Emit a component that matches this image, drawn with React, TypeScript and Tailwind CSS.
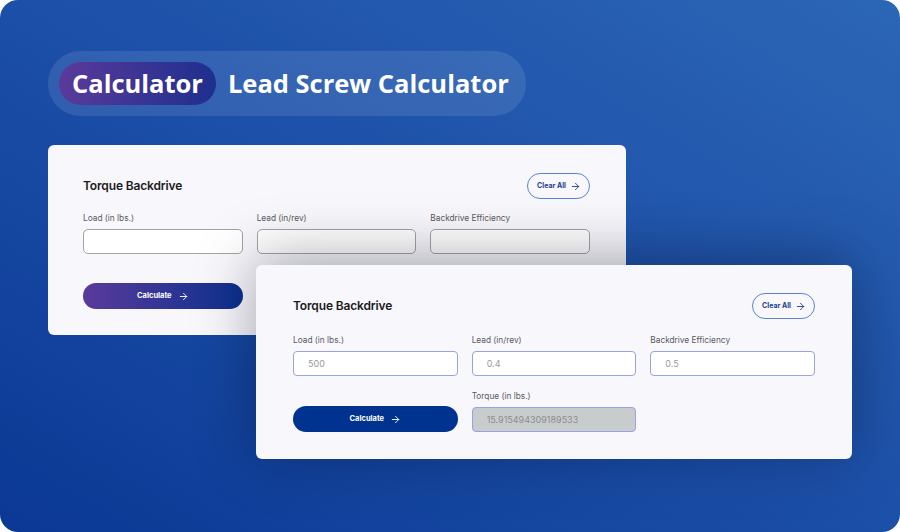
import React from "react";
import { ArrowRight } from "lucide-react";

type CardProps = {
  values?: [string, string, string];
  result?: string;
  gradientButton?: boolean;
  className: string;
  inputClass: string;
  rowGap: string;
};

function Card({ values, result, gradientButton, className, inputClass, rowGap }: CardProps) {
  const labels = ["Load (in lbs.)", "Lead (in/rev)", "Backdrive Efficiency"];
  return (
    <div className={className} style={{ fontFamily: "Inter, 'Noto Sans', sans-serif" }}>
      <div className="flex h-[26px] items-center justify-between">
        <div className="text-[12px] font-semibold tracking-[-0.15px] text-[#1b1b22]">Torque Backdrive</div>
        <button className="flex h-[26px] items-center gap-[4px] rounded-full border border-[#5d84d2] pl-[9px] pr-[8px] text-[7px] font-bold text-[#24418f]">
          Clear All
          <ArrowRight size={11} strokeWidth={2} />
        </button>
      </div>
      <div className={rowGap + " grid grid-cols-3 gap-x-[14px]"}>
        {labels.map((l, i) => (
          <div key={l} className="flex flex-col">
            <div className="h-[16px] text-[8.3px] leading-[16px] text-[#5a5a5e]">{l}</div>
            <div className={inputClass + " mt-[3px] flex h-[25px] items-center px-[14px] text-[9px] text-[#9a9a9a]"}>
              {values ? values[i] : ""}
            </div>
          </div>
        ))}
        <div className="mt-[29px] flex items-end">
          <button
            className={
              (gradientButton
                ? "bg-[linear-gradient(to_right,#5a3a9b,#0b318f)] "
                : "bg-[#00338f] ") +
              "flex h-[26px] w-full items-center justify-center gap-[6px] rounded-full text-[7.5px] font-bold text-white"
            }
          >
            Calculate
            <ArrowRight size={11} strokeWidth={2} />
          </button>
        </div>
        {result !== undefined ? (
          <div className="mt-[12px] flex flex-col">
            <div className="h-[16px] text-[8.3px] leading-[16px] text-[#5a5a5e]">Torque (in lbs.)</div>
            <div className="mt-[3px] flex h-[25px] items-center rounded-[4px] border border-[#9aa2e6] bg-[#c9cccd] px-[14px] text-[9px] text-[#8a8d90]">
              {result}
            </div>
          </div>
        ) : null}
      </div>
    </div>
  );
}

export default function App() {
  return (
    <div className="h-[532px] w-[900px] bg-white">
      <div className="relative h-full w-full overflow-hidden rounded-[18px] bg-[linear-gradient(to_top_right,#0a3894,#1c4fa8_50%,#2c66b6)] pl-[48px] pt-[51px]">
        <div
          className="inline-flex h-[65px] items-center gap-[12px] rounded-full bg-white/10 pl-[11px] pr-[17px] text-[25.5px] font-bold text-white"
          style={{ fontFamily: "'Open Sans', 'Noto Sans', sans-serif" }}
        >
          <div className="flex h-[43px] items-center rounded-full bg-[linear-gradient(to_right,#5a3a9a,#1e2f8e)] px-[13px]">
            Calculator
          </div>
          <div>Lead Screw Calculator</div>
        </div>

        <Card
          gradientButton
          rowGap="mt-[11px]"
          className="mt-[29px] h-[190px] w-[578px] rounded-[6px] bg-[#f7f7fc] pl-[35px] pr-[36px] pt-[28px]"
          inputClass="rounded-[5px] border border-[#a3a3a6] bg-white"
        />

        <Card
          values={["500", "0.4", "0.5"]}
          result="15.915494309189533"
          rowGap="mt-[13px]"
          className="absolute left-[256px] top-[265px] h-[194px] w-[596px] rounded-[6px] bg-[#f7f7fc] px-[37px] pt-[28px] shadow-[0_-6px_60px_rgba(0,0,20,0.35)]"
          inputClass="rounded-[4px] border border-[#9aa2e6] bg-white"
        />
      </div>
    </div>
  );
}
